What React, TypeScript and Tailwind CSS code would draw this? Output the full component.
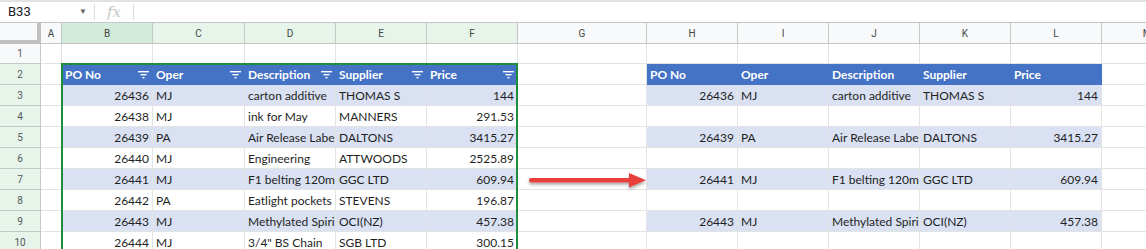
import { ReactNode } from "react";

const cols = ["", "A", "B", "C", "D", "E", "F", "G", "H", "I", "J", "K", "L", "M"];

type Row = [string, string, string, string, string];

const data: Row[] = [
  ["26436", "MJ", "carton additive", "THOMAS S", "144"],
  ["26438", "MJ", "ink for May", "MANNERS", "291.53"],
  ["26439", "PA", "Air Release Labels", "DALTONS", "3415.27"],
  ["26440", "MJ", "Engineering", "ATTWOODS", "2525.89"],
  ["26441", "MJ", "F1 belting 120mm", "GGC LTD", "609.94"],
  ["26442", "PA", "Eatlight pockets", "STEVENS", "196.87"],
  ["26443", "MJ", "Methylated Spirits", "OCI(NZ)", "457.38"],
  ["26444", "MJ", '3/4" BS Chain', "SGB LTD", "300.15"],
];

const heads = ["PO No", "Oper", "Description", "Supplier", "Price"];

function FilterIcon() {
  return (
    <svg width="11" height="8" viewBox="0 0 11 8" className="shrink-0">
      <rect x="0" y="0" width="11" height="1.4" fill="#fff" />
      <rect x="2.5" y="3" width="6" height="1.4" fill="#fff" />
      <rect x="4.5" y="6" width="2" height="1.4" fill="#fff" />
    </svg>
  );
}

function Cell({
  children,
  className = "",
}: {
  children?: ReactNode;
  className?: string;
}) {
  return (
    <div
      className={
        "flex items-center overflow-hidden whitespace-nowrap border-r border-b border-[#e2e3e3] px-[3px] pt-[2px] " +
        className
      }
    >
      {children}
    </div>
  );
}

function RowHead({ n, hl }: { n: number; hl: boolean }) {
  return (
    <div
      className={
        "flex items-center justify-center border-r border-b border-[#c4c7c5] font-['Roboto',sans-serif] text-[10px] text-[#575a5e] " +
        (hl ? "bg-[#e6f4ea]" : "bg-[#f8f9fa]")
      }
    >
      {n}
    </div>
  );
}

function headCell(label: string, filter: boolean, key: string) {
  return (
    <Cell
      key={key}
      className="justify-between bg-[#4472c4] font-bold text-white border-r-[#4472c4] border-b-[#4472c4]"
    >
      <span>{label}</span>
      {filter && <FilterIcon />}
    </Cell>
  );
}

function dataCells(r: Row | null, band: boolean, prefix: string) {
  const bg = band ? "bg-[#d9e1f2] border-[#cdd3de]" : "bg-white";
  return [0, 1, 2, 3, 4].map((i) => (
    <Cell
      key={prefix + i}
      className={bg + (i === 0 || i === 4 ? " justify-end" : "")}
    >
      {r ? r[i] : ""}
    </Cell>
  ));
}

export default function App() {
  const rowHeights = ["h-[20px]", ...Array(9).fill("h-[21px]")];

  return (
    <div className="relative h-[249px] w-[1146px] overflow-hidden bg-white font-['Lato',sans-serif] text-[12px] text-[#1f1f1f]">
      {/* formula bar */}
      <div className="flex h-[23px] items-center border-t-2 border-b border-t-[#e1e3e1] border-b-[#c4c7c5] font-['Roboto',sans-serif]">
        <div className="flex w-[94px] items-center justify-between pl-[8px] pr-[7px] text-[13px] text-[#202124]">
          <span>B33</span>
          <span className="text-[8px] text-[#5f6368]">▼</span>
        </div>
        <div className="h-[16px] w-px bg-[#dadce0]" />
        <div className="w-[38px] pl-[12px] font-['DejaVu_Serif',serif] text-[15px] italic text-[#c4c7c5]">
          fx
        </div>
        <div className="h-[16px] w-px bg-[#dadce0]" />
      </div>

      <div className="grid grid-cols-[41px_21px_91px_92px_91px_91px_91px_129px_91px_91px_91px_91px_91px_91px]">
        {/* column headers */}
        {cols.map((c, i) =>
          i === 0 ? (
            <div
              key="corner"
              className="h-[21px] border-r-4 border-b-4 border-[#c0c0c0] bg-[#f8f9fa]"
            />
          ) : (
            <div
              key={c}
              className={
                "flex h-[21px] items-center justify-center border-r border-b border-[#c4c7c5] text-[10px] text-[#444746] font-['Roboto',sans-serif] " +
                (c === "B"
                  ? "bg-[#d3ebdb]"
                  : ["C", "D", "E", "F"].includes(c)
                    ? "bg-[#e6f4ea]"
                    : "bg-[#f8f9fa]")
              }
            >
              {c}
            </div>
          ),
        )}

        {rowHeights.map((h, ri) => {
          const n = ri + 1;
          const cells: ReactNode[] = [];
          cells.push(<RowHead key={"rh" + n} n={n} hl={n > 1} />);
          cells.push(<Cell key={"a" + n} />);
          if (n === 1) {
            for (let i = 0; i < 12; i++) cells.push(<Cell key={"e1" + i} />);
          } else if (n === 2) {
            heads.forEach((t, i) => cells.push(headCell(t, true, "lh" + i)));
            cells.push(<Cell key="g2" />);
            heads.forEach((t, i) => cells.push(headCell(t, false, "rh" + i)));
            cells.push(<Cell key="m2" />);
          } else {
            const r = data[n - 3];
            const band = n % 2 === 1;
            cells.push(...dataCells(r, band, "l" + n));
            cells.push(<Cell key={"g" + n} />);
            cells.push(...dataCells(band ? r : null, band, "r" + n));
            cells.push(<Cell key={"m" + n} />);
          }
          return cells.map((c, k) => (
            <div key={n + "-" + k} className={h + " grid"}>
              {c}
            </div>
          ));
        })}
      </div>

      {/* selection outline around B2:F */}
      <div className="pointer-events-none absolute left-[61px] top-[63px] h-[200px] w-[457px] border-2 border-[#1e8e3e]" />

      {/* red arrow */}
      <svg
        className="pointer-events-none absolute left-[524px] top-[168px]"
        width="128"
        height="26"
        viewBox="0 0 128 26"
      >
        <defs>
          <filter id="sh" x="-10%" y="-50%" width="120%" height="200%">
            <feDropShadow dx="0" dy="2" stdDeviation="1.5" floodColor="#000" floodOpacity="0.35" />
          </filter>
        </defs>
        <g filter="url(#sh)">
          <rect x="5" y="10" width="102" height="4.5" rx="2" fill="#e8413e" />
          <polygon points="105,5 122,12.2 105,19.5" fill="#e8413e" />
        </g>
      </svg>
    </div>
  );
}
